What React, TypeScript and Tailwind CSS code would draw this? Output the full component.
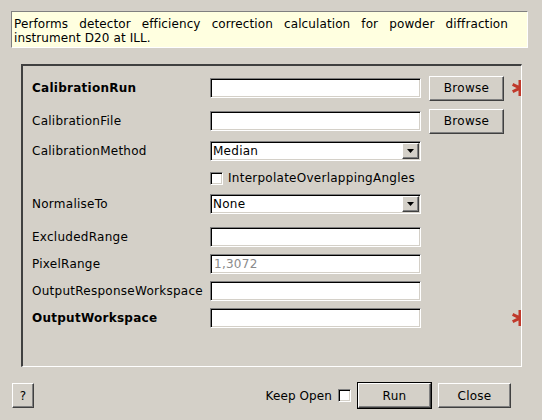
import React from "react";

const font = { fontFamily: '"DejaVu Sans", Verdana, sans-serif' };

function Star() {
  return (
    <svg width="16" height="16" viewBox="0 0 16 16" className="block">
      <path d="M8 1.5 L8 14.5 M2 5 L14 11 M2 11 L14 5" stroke="#c0392b" strokeWidth="3" strokeLinecap="square" fill="none" />
    </svg>
  );
}

const fieldCls =
  "w-[211px] shrink-0 h-[20px] bg-white border border-t-[#808080] border-l-[#808080] border-b-white border-r-white shadow-[inset_1px_1px_0_#000,inset_-1px_-1px_0_#d4d0c8] flex items-center text-[12px] tracking-[0.26px]";

function Field({ text, gray }: { text?: string; gray?: boolean }) {
  return (
    <div className={`${fieldCls} pl-[3px]`}>
      <span className={gray ? "text-[#8a8a8a]" : "text-black"}>{text ?? ""}</span>
    </div>
  );
}

function Combo({ text }: { text: string }) {
  return (
    <div className={`${fieldCls} pl-[2px] pr-[1px]`}>
      <span className="flex-1 text-black">{text}</span>
      <div className="w-[17px] h-[16px] bg-[#d4d0c8] border border-t-white border-l-white border-b-[#404040] border-r-[#404040] shadow-[inset_-1px_-1px_0_#808080] flex items-center justify-center">
        <svg width="7" height="4" viewBox="0 0 7 4"><path d="M0 0 H7 L3.5 4 Z" fill="#000" /></svg>
      </div>
    </div>
  );
}

function Button({ label, w, h, def }: { label: string; w: number; h: number; def?: boolean }) {
  const inner = (
    <div
      className="bg-[#d4d0c8] border border-t-white border-l-white border-b-[#404040] border-r-[#404040] shadow-[inset_-1px_-1px_0_#808080] flex items-center justify-center text-[12px] tracking-[0.26px] text-black"
      style={{ width: def ? w - 2 : w, height: def ? h - 2 : h }}
    >
      {label}
    </div>
  );
  if (def) return <div className="border border-black">{inner}</div>;
  return inner;
}

function CheckBox() {
  return (
    <div className="w-[13px] h-[13px] shrink-0 bg-white border border-t-[#808080] border-l-[#808080] border-b-white border-r-white shadow-[inset_1px_1px_0_#000,inset_-1px_-1px_0_#d4d0c8]" />
  );
}

function Row({ label, bold, children, mt }: { label?: string; bold?: boolean; children: React.ReactNode; mt: string }) {
  return (
    <div className={`flex items-center h-[20px] ${mt}`}>
      <div className={`w-[187px] shrink-0 pl-[9px] text-[12px] tracking-[0.26px] text-black whitespace-nowrap ${bold ? "font-bold" : ""}`}>{label}</div>
      {children}
    </div>
  );
}

export default function App() {
  return (
    <div className="w-[542px] h-[420px] bg-[#d4d0c8] overflow-hidden" style={font}>
      <div className="pt-[11px] pl-[11px]">
        <div className="w-[517px] h-[37px] bg-[#ffffe0] border border-t-[#808080] border-l-[#808080] border-b-white border-r-white pl-[2px] pr-[19px] pt-[5px] text-[12px] leading-[14px] tracking-[0.1px] text-black text-justify">
          Performs detector efficiency correction calculation for powder diffraction instrument D20 at ILL.
        </div>
      </div>
      <div className="pl-[21px] pt-[16px]">
        <div className="w-[501px] h-[303px] border-2 border-t-[#404040] border-l-[#404040] border-b-white border-r-white border-b border-r overflow-hidden pt-[12px]">
          <Row label="CalibrationRun" bold mt="">
            <Field />
            <div className="ml-[8px] shrink-0"><Button label="Browse" w={75} h={25} /></div>
            <div className="ml-[8px] shrink-0"><Star /></div>
          </Row>
          <Row label="CalibrationFile" mt="mt-[13px]">
            <Field />
            <div className="ml-[8px] shrink-0"><Button label="Browse" w={75} h={25} /></div>
          </Row>
          <Row label="CalibrationMethod" mt="mt-[10px]">
            <Combo text="Median" />
          </Row>
          <Row mt="mt-[7px]">
            <div className="flex items-center gap-[5px] text-[12px] tracking-[0.26px] text-black">
              <CheckBox />
              <span>InterpolateOverlappingAngles</span>
            </div>
          </Row>
          <Row label="NormaliseTo" mt="mt-[6px]">
            <Combo text="None" />
          </Row>
          <Row label="ExcludedRange" mt="mt-[13px]">
            <Field />
          </Row>
          <Row label="PixelRange" mt="mt-[7px]">
            <Field text="1,3072" gray />
          </Row>
          <Row label="OutputResponseWorkspace" mt="mt-[7px]">
            <Field />
          </Row>
          <Row label="OutputWorkspace" bold mt="mt-[7px]">
            <Field />
            <div className="ml-[91px] shrink-0"><Star /></div>
          </Row>
        </div>
      </div>
      <div className="flex items-center pl-[12px] pr-[31px] mt-[15px] h-[27px]">
        <Button label="?" w={22} h={25} />
        <div className="flex-1" />
        <span className="text-[12px] tracking-[0.1px] text-black mr-[6px]">Keep Open</span>
        <CheckBox />
        <div className="ml-[6px]"><Button label="Run" w={75} h={27} def /></div>
        <div className="ml-[6px]"><Button label="Close" w={73} h={25} /></div>
      </div>
    </div>
  );
}
